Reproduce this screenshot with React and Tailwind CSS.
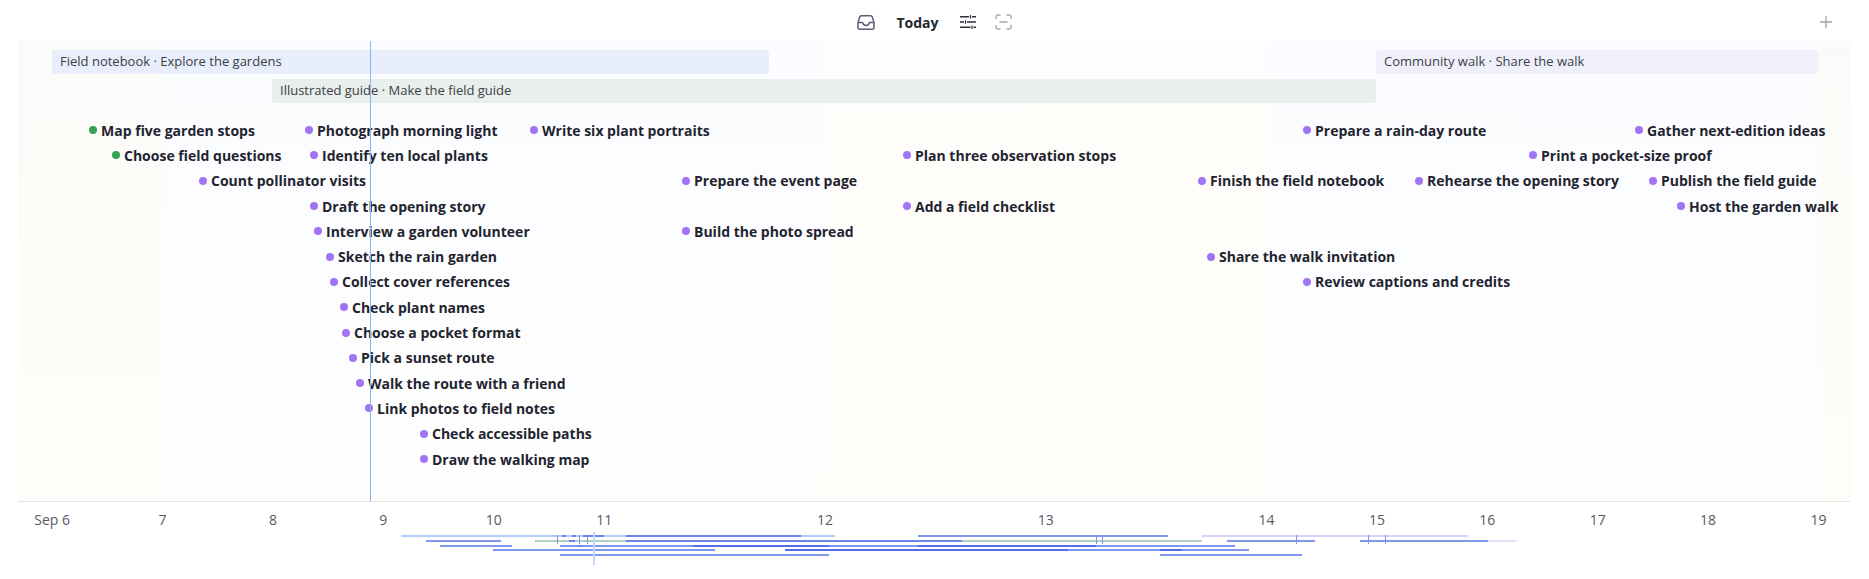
import React from 'react';

// days sit on a 110.4px grid, 11 to 14 take two cells each
const DAYS = ['Sep 6', '7', '8', '9', '10', '11', '', '12', '', '13', '', '14', '15', '16', '17', '18', '19'];

const ROWS = [
  [
    { t: 'Map five garden stops', x: 93, green: true },
    { t: 'Photograph morning light', x: 309 },
    { t: 'Write six plant portraits', x: 534 },
    { t: 'Prepare a rain-day route', x: 1307 },
    { t: 'Gather next-edition ideas', x: 1639 },
  ],
  [
    { t: 'Choose field questions', x: 116, green: true },
    { t: 'Identify ten local plants', x: 314 },
    { t: 'Plan three observation stops', x: 907 },
    { t: 'Print a pocket-size proof', x: 1533 },
  ],
  [
    { t: 'Count pollinator visits', x: 203 },
    { t: 'Prepare the event page', x: 686 },
    { t: 'Finish the field notebook', x: 1202 },
    { t: 'Rehearse the opening story', x: 1419 },
    { t: 'Publish the field guide', x: 1653 },
  ],
  [
    { t: 'Draft the opening story', x: 314 },
    { t: 'Add a field checklist', x: 907 },
    { t: 'Host the garden walk', x: 1681 },
  ],
  [
    { t: 'Interview a garden volunteer', x: 318 },
    { t: 'Build the photo spread', x: 686 },
  ],
  [
    { t: 'Sketch the rain garden', x: 330 },
    { t: 'Share the walk invitation', x: 1211 },
  ],
  [
    { t: 'Collect cover references', x: 334 },
    { t: 'Review captions and credits', x: 1307 },
  ],
  [{ t: 'Check plant names', x: 344 }],
  [{ t: 'Choose a pocket format', x: 346 }],
  [{ t: 'Pick a sunset route', x: 353 }],
  [{ t: 'Walk the route with a friend', x: 360 }],
  [{ t: 'Link photos to field notes', x: 369 }],
  [{ t: 'Check accessible paths', x: 424 }],
  [{ t: 'Draw the walking map', x: 424 }],
];

const LIGHT = '#b3cbf6';
const MID = '#8197ee';
const DARK = '#6a84ea';
const DEEP = '#5570e6';
const GREEN = '#b2cfc0';
const LILAC = '#dcd0fa';
const PALE = '#dfe0fa';

// minimap rows, each segment is [left, right, colour]
const MINIMAP = [
  [[401, 835, LIGHT], [562, 566, DARK], [572, 576, DARK], [583, 604, DARK], [626, 801, DARK], [918, 1168, MID], [1202, 1468, LILAC]],
  [[426, 501, MID], [535, 1202, GREEN], [569, 575, DARK], [626, 962, DARK], [1227, 1315, MID], [1360, 1488, MID], [1488, 1516, PALE]],
  [[440, 512, MID], [560, 1235, MID], [578, 583, DARK], [693, 829, DEEP], [918, 1096, DEEP]],
  [[493, 715, MID], [785, 1068, DEEP], [1068, 1249, MID], [1160, 1182, DEEP]],
  [[560, 829, MID], [1160, 1302, MID]],
];
const TICKS = [557, 579, 587, 1096, 1102, 1296, 1368, 1385];

function Bar({ className, label }) {
  return (
    <div className={`flex h-6 items-center rounded-[3px] px-2 pb-px text-[13px] text-[#3c4043] ${className}`}>
      {label}
    </div>
  );
}

export default function App() {
  return (
    <div className="flex h-[579px] w-[1869px] flex-col overflow-hidden bg-white font-['Open_Sans','Noto_Sans',sans-serif]">
      <header className="relative flex h-[41px] shrink-0 items-center justify-center pt-[3px]">
        <div className="flex items-center gap-[21px]">
          <svg width="18" height="15" viewBox="0 0 18 15" fill="none" stroke="#5f5b78" strokeWidth="1.5" strokeLinejoin="round">
            <path d="M4.200.8h9.600a1.500 1.500 0 0 1 1.400 1L17 7.500v4.700a2 2 0 0 1-2 2H3a2 2 0 0 1-2-2V7.500l1.800-5.700a1.500 1.500 0 0 1 1.400-1z" />
            <path d="M1 7.500h4.500c.6 2 1.800 3 3.500 3s2.900-1 3.500-3H17" />
          </svg>
          <span className="text-[14px] font-bold text-[#23262f]">Today</span>
          <svg width="16" height="14" viewBox="0 0 16 14" fill="none" stroke="#2f323a">
            <path d="M0 1.700h9M12 1.700h4M0 7h4M7 7h9M0 12.300h10.500M13.500 12.300h2.500" strokeWidth="1.500" />
            <path d="M10.500 0v3.400M5.500 5.300v3.400M12 10.600V14" strokeWidth="1.200" />
          </svg>
          <svg className="-ml-[2px]" width="17" height="16" viewBox="0 0 17 16" fill="none" stroke="#a9a9ad" strokeWidth="1.400" strokeLinecap="round">
            <path d="M1 4.500V3a2 2 0 0 1 2-2h2M12 1h2a2 2 0 0 1 2 2v1.500M1 11.500V13a2 2 0 0 0 2 2h2M12 15h2a2 2 0 0 0 2-2v-1.500M5 8h7" />
          </svg>
        </div>
        <svg className="absolute right-[37px] top-[16px]" width="12" height="12" viewBox="0 0 12 12" stroke="#a3a3a3" strokeWidth="1.300">
          <path d="M6 0v12M0 6h12" />
        </svg>
      </header>

      <div className="relative mx-[18px] h-[461px] shrink-0 border-b border-[#e3e3e3]">
        {/* day tint behind the plot */}
        <div className="absolute inset-0 flex">
          <div className="w-[144px] bg-gradient-to-b from-[#fbfbf9] to-[#fffdf9]" />
          <div className="w-[663px] bg-gradient-to-b from-[#fbfcff] to-[#fefefd]" />
          <div className="w-[441px] bg-gradient-to-b from-[#fefdfb] to-[#fffdf9]" />
          <div className="w-[552px] bg-gradient-to-b from-[#fbfcff] to-[#fefefe]" />
          <div className="flex-1 bg-gradient-to-b from-[#fafaf8] to-[#fffdf8]" />
        </div>

        <div className="relative flex flex-col">
          <div className="flex pl-[34px] pt-[9px]">
            <Bar className="w-[717px] bg-[#e8eefb]" label="Field notebook · Explore the gardens" />
            <Bar className="ml-[607px] w-[442px] bg-[#f0f0fd]" label="Community walk · Share the walk" />
          </div>
          <div className="flex pl-[254px] pt-[5px]">
            <Bar className="w-[1104px] bg-[#e8efec]" label="Illustrated guide · Make the field guide" />
          </div>
          <div className="flex flex-col pt-[14.5px]">
            {ROWS.map((row, i) => (
              <div key={i} className="relative h-[25.3px]">
                {row.map((e) => (
                  <div
                    key={e.t}
                    className="absolute inset-y-0 flex items-center gap-[4px] whitespace-nowrap text-[14px] font-bold text-[#1f2430]"
                    style={{ left: e.x - 22 }}
                  >
                    <span className={`h-2 w-2 rounded-full ${e.green ? 'bg-[#35a354]' : 'bg-[#a074f4]'}`} />
                    {e.t}
                  </div>
                ))}
              </div>
            ))}
          </div>
        </div>

        <div className="absolute inset-y-0 left-[352px] w-px bg-[#8ab4f8]" />
      </div>

      <div className="relative flex flex-1 flex-col">
        <div className="ml-[-3px] grid grid-cols-[repeat(17,110.4px)] pt-[7px] text-center text-[14px] text-[#555b66]">
          {DAYS.map((d, i) => (
            <span key={i}>{d}</span>
          ))}
        </div>
        <div className="flex flex-col gap-[2.8px] pt-[5px]">
          {MINIMAP.map((row, i) => (
            <div key={i} className="relative h-[2px]">
              {row.map(([a, b, color]) => (
                <div
                  key={a}
                  className="absolute inset-y-0"
                  style={{ left: a, width: b - a, backgroundColor: color }}
                />
              ))}
            </div>
          ))}
        </div>
        {TICKS.map((x) => (
          <div key={x} className="absolute top-[33px] h-[9px] w-px bg-[#7f96ee]" style={{ left: x }} />
        ))}
        <div className="absolute left-[593px] top-[30px] h-[33px] w-[2px] bg-[#c0d5f8]" />
      </div>
    </div>
  );
}
